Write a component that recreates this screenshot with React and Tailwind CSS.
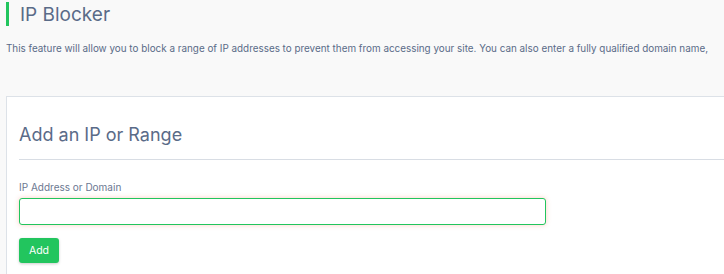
export default function App() {
  return (
    <div className="min-h-[274px] bg-[#f9f9f9] overflow-hidden font-['Inter',sans-serif]">
      <div className="pt-[2px] pl-[6px]">
        <div className="flex items-center h-[24px] border-l-[3px] border-[#22c55e] pl-[11px]">
          <h1 className="text-[19px] leading-none text-[#5a6b88] font-normal">IP Blocker</h1>
        </div>
        <p className="mt-[15px] text-[9.9px] leading-[14px] text-[#5a6b88] whitespace-nowrap">
          This feature will allow you to block a range of IP addresses to prevent them from accessing your site. You can also enter a fully qualified domain name,
        </p>
      </div>

      <div className="mt-[41px] ml-[6px] w-[760px] bg-white border border-[#dde2e8] border-r-0 pt-[23px] pl-[12px] pb-[12px]">
        <h2 className="text-[18px] leading-[30px] text-[#5a6b88] font-normal">Add an IP or Range</h2>
        <div className="mt-[9px] border-t border-[#d8dde4]" />
        <div className="pt-[20px]">
          <label className="block text-[10px] leading-[14px] text-[#6b7891]">IP Address or Domain</label>
          <input
            type="text"
            className="mt-[4px] block w-[527px] h-[27px] rounded-[3px] border border-[#22c55e] bg-white shadow-[0_0_5px_rgba(251,146,120,0.45)] outline-none"
          />
          <button className="mt-[13px] w-[40px] h-[25px] rounded-[3px] bg-[#22c55e] text-white text-[10.5px] shadow-[0_1px_3px_rgba(0,0,0,0.2)]">
            Add
          </button>
        </div>
      </div>
    </div>
  );
}
